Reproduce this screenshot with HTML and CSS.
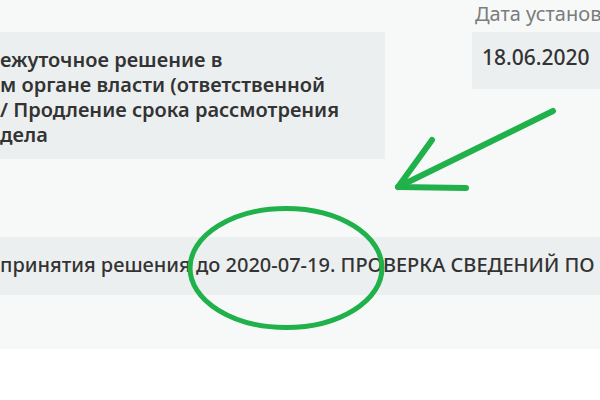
FILE: index.html
```html
<!DOCTYPE html>
<html lang="ru">
<head>
<meta charset="utf-8">
<link rel="stylesheet" href="styles.css">
</head>
<body>
<div class="page">
  <div class="top-row">
    <div class="col-left">
      <div class="label label-empty"></div>
      <div class="field field-multi">
        <div class="line">ежуточное решение в</div>
        <div class="line">м органе власти (ответственной</div>
        <div class="line">/ Продление срока рассмотрения</div>
        <div class="line">дела</div>
      </div>
    </div>
    <div class="col-right">
      <div class="label">Дата установления</div>
      <div class="field field-date">18.06.2020</div>
    </div>
  </div>
  <div class="field field-wide">принятия решения до 2020-07-19. ПРОВЕРКА СВЕДЕНИЙ ПО ЗАЯВЛЕНИЮ</div>
  <svg class="marks" width="600" height="349" viewBox="0 0 600 349">
    <g fill="none" stroke="#21b14b" stroke-width="6" stroke-linecap="round" stroke-linejoin="round">
      <line x1="553" y1="111" x2="398" y2="187"/>
      <polyline points="432,140 398,187 466,188"/>
      <ellipse cx="286" cy="268" rx="96" ry="59.5" stroke-width="5"/>
    </g>
  </svg>
</div>
</body>
</html>
```

FILE: styles.css
```css
html, body {
  margin: 0;
  padding: 0;
  background: #ffffff;
}
body {
  width: 600px;
  height: 400px;
  overflow: hidden;
  font-family: "Noto Sans", "Open Sans", sans-serif;
  color: #333333;
}
.page {
  position: relative;
  height: 349px;
  background: #f7f9f9;
  overflow: hidden;
}
.top-row {
  display: flex;
  gap: 87px;
  width: 800px;
}
.col-left {
  width: 385px;
  flex: none;
}
.col-right {
  flex: 1;
}
.label {
  height: 32px;
  box-sizing: border-box;
  padding-left: 3px;
  padding-top: 1px;
  font-size: 20px;
  line-height: 25px;
  color: #7c7c7c;
  white-space: nowrap;
}
.field {
  background: #eceff0;
  font-size: 20px;
  line-height: 25px;
  white-space: nowrap;
}
.field-multi {
  height: 127px;
  box-sizing: border-box;
  padding-top: 15px;
  font-weight: 600;
}
.field-date {
  height: 57px;
  box-sizing: border-box;
  padding: 13px 0 0 10px;
  font-size: 21px;
  font-weight: 500;
}
.field-wide {
  margin-top: 78px;
  height: 58px;
  box-sizing: border-box;
  padding-top: 15px;
  font-weight: 500;
  overflow: hidden;
}
.marks {
  position: absolute;
  left: 0;
  top: 0;
  pointer-events: none;
}
```
